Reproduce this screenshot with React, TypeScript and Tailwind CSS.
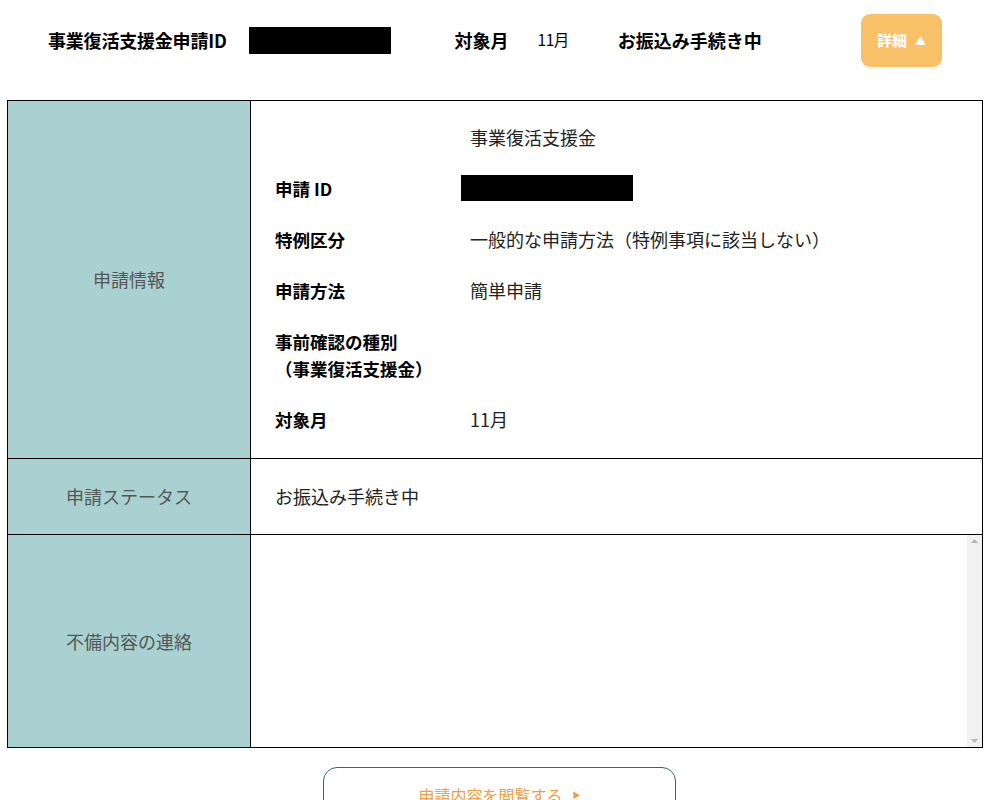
import React from "react";

const font = { fontFamily: '"Noto Sans CJK JP", "Noto Sans", sans-serif' };

function Item({ label, children }: { label?: React.ReactNode; children?: React.ReactNode }) {
  return (
    <div className="flex">
      <div className="w-[195px] shrink-0 font-bold text-[17.5px] leading-[27px] text-black">{label}</div>
      <div className="flex-1 text-[18px] leading-[27px] text-[#222]">{children}</div>
    </div>
  );
}

export default function App() {
  return (
    <div className="w-[989px] h-[800px] overflow-hidden bg-white text-black" style={font}>
      {/* header */}
      <div className="h-[100px] flex items-start">
        <div className="flex items-center h-[80px] w-full">
          <div className="ml-[48px] font-bold text-[18px] tracking-[-0.2px]">事業復活支援金申請ID</div>
          <div className="ml-[22px] w-[142px] h-[27px] bg-black" />
          <div className="ml-[64px] font-bold text-[18px]">対象月</div>
          <div className="ml-[29px] text-[15.5px] tracking-[-0.5px]">11月</div>
          <div className="ml-[49px] font-bold text-[18px]">お振込み手続き中</div>
          <div className="ml-auto mr-[47px] w-[81px] h-[53px] rounded-[9px] bg-[#f8c067] flex items-center justify-center gap-[8px] text-white">
            <span className="font-bold text-[15px]">詳細</span>
            <span className="text-[11px]">▲</span>
          </div>
        </div>
      </div>

      {/* table */}
      <div className="mx-[7px] w-[976px] border border-black">
        {/* row 1 */}
        <div className="flex border-b border-black h-[358px]">
          <div className="w-[243px] shrink-0 bg-[#a9d1d1] border-r border-black flex items-center justify-center text-[18px] text-[#555]">
            申請情報
          </div>
          <div className="flex-1 pl-[24px] pt-[23px] flex flex-col gap-[24px]">
            <Item>事業復活支援金</Item>
            <Item label="申請 ID">
              <div className="-ml-[9px] w-[172px] h-[26px] bg-black" />
            </Item>
            <Item label="特例区分">一般的な申請方法（特例事項に該当しない）</Item>
            <Item label="申請方法">簡単申請</Item>
            <Item label={<><div>事前確認の種別</div><div>（事業復活支援金）</div></>} />
            <Item label="対象月">11月</Item>
          </div>
        </div>
        {/* row 2 */}
        <div className="flex border-b border-black h-[76px]">
          <div className="w-[243px] shrink-0 bg-[#a9d1d1] border-r border-black flex items-center justify-center text-[18px] text-[#555]">
            申請ステータス
          </div>
          <div className="flex-1 pl-[24px] flex items-center text-[18px] text-[#222]">お振込み手続き中</div>
        </div>
        {/* row 3 */}
        <div className="flex h-[212px]">
          <div className="w-[243px] shrink-0 bg-[#a9d1d1] border-r border-black flex items-center justify-center text-[18px] text-[#555]">
            不備内容の連絡
          </div>
          <div className="flex-1 flex">
            <div className="flex-1" />
            <div className="w-[15px] bg-[#f1f1f1] flex flex-col items-center justify-between py-[4px]">
              <svg width="7" height="4" viewBox="0 0 7 4"><path d="M0 4 L3.5 0 L7 4 Z" fill="#b5b5b5" /></svg>
              <svg width="7" height="4" viewBox="0 0 7 4"><path d="M0 0 L3.5 4 L7 0 Z" fill="#b5b5b5" /></svg>
            </div>
          </div>
        </div>
      </div>

      {/* bottom button */}
      <div className="flex justify-center mt-[19px] pl-[10px]">
        <div className="w-[353px] h-[60px] border border-[#2a6b6b] rounded-[14px] flex justify-center pt-[15px]">
          <span className="text-[16px] text-[#f0a040] leading-[24px]">申請内容を閲覧する</span>
          <span className="ml-[10px] text-[8px] text-[#f0a040] leading-[24px]">▶</span>
        </div>
      </div>
    </div>
  );
}
